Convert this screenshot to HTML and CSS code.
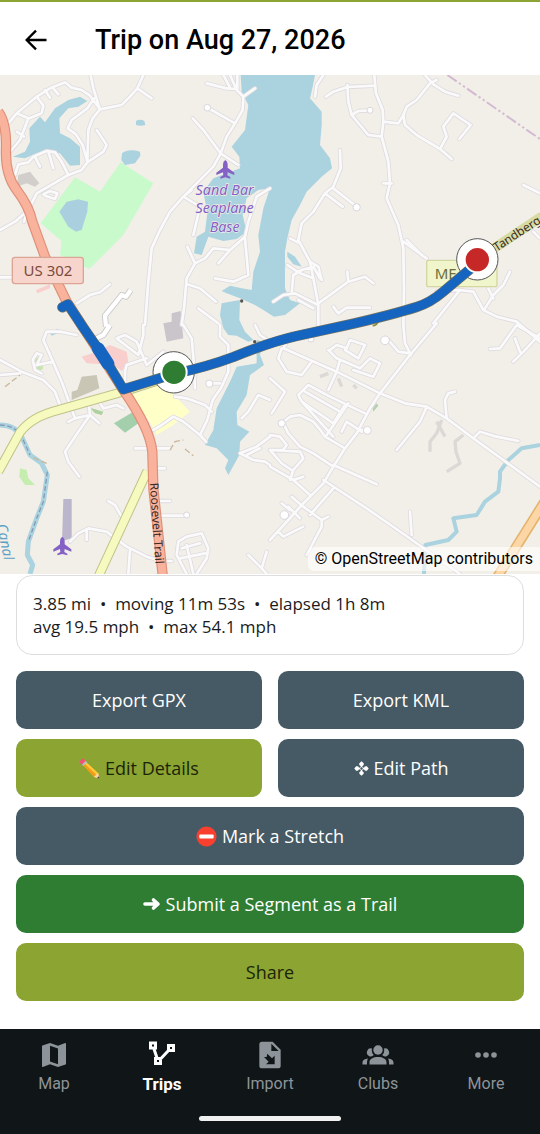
FILE: index.html
```html
<!DOCTYPE html>
<html lang="en">
<head>
    <meta charset="UTF-8">
    <meta name="viewport" content="width=device-width, initial-scale=1.0">
    <title>Trip on Aug 27, 2026</title>
    <link rel="stylesheet" href="styles.css">
</head>
<body>
    <header class="header">
        <button class="back-btn" aria-label="Back">
            <svg viewBox="0 0 24 24" width="28" height="28"><path d="M21 12H4.500M12 4L4 12l8 8" fill="none" stroke="currentColor" stroke-width="2"/></svg>
        </button>
        <h1>Trip on Aug 27, 2026</h1>
    </header>

    <div class="map">
        <svg class="map-canvas" viewBox="0 0 1620 1497" role="img" aria-label="Trip map">
            <defs>
                <g id="roads">
                    <!-- north west -->
                    <path d="M25 145L50 115L110 65L150 40L195 22L215 38L245 45L270 62L300 103M272 0L280 40L300 103L365 90L390 65L412 40L430 0M412 40L455 70M300 103L278 130L265 165L262 260M283 70L262 100L215 135L203 160L228 178L248 210L262 260M290 165L320 210L310 230L262 262L245 285L205 300L110 355L85 405L45 440L0 465M205 300L185 260L165 232L140 228L100 245L85 262L55 268L45 300M145 230L160 280M105 245L120 275M130 358L150 348L172 355L165 372L135 362M32 228L60 195L85 130L50 115M110 65L130 92L125 115L88 130M135 45L150 68M158 38L175 58M50 170L72 185M90 385L72 440M0 607H40"/>
                    <path d="M765 40L730 65L728 105L705 145L680 185L662 235L640 275L550 365L510 410L480 465L455 520L445 620L435 750M620 98L640 108L705 145M578 130L610 165L662 235L715 270M690 0L710 45L730 65M620 25L680 40L712 42M670 0L690 38M712 0V40M575 345L550 365L600 395L580 480M810 340L770 365L745 440L735 485L690 525L640 520L615 550L585 565L560 610L552 700L545 750M562 515L585 565M690 525L655 565M735 490L745 600L700 620L645 610M562 628L600 640L648 680M595 700L655 745M230 685L270 660L300 652L330 628"/>
                    <!-- north east -->
                    <path d="M978 65L1000 50L1042 36L1125 32M1123 0L1128 55L1148 105L1150 140L1145 185L1165 260L1170 325L1160 370L1195 450L1210 520L1212 640L1210 750M1042 30L1045 80L1055 120L1105 180L1145 185M1055 120L1075 108L1110 106M1150 140L1195 145L1210 120L1220 95L1250 75L1290 25L1310 15M1275 0L1300 28L1335 50L1375 62M1210 120L1215 150L1250 180L1320 222L1355 252M1320 222L1340 185L1330 155L1360 115L1412 150L1378 192M970 0L950 30L945 65M1020 225L1022 280L1000 335L975 355L940 410L905 445L895 495L930 560L940 610L955 690L955 750M975 355L1028 395M1000 340L1070 395M1210 500L1280 550M870 490L900 505M880 600L905 585L940 575L960 610M862 570L900 595L940 610M955 685L1045 620L1095 605L1120 625M1045 620L1042 590M820 680L850 660L885 655L955 690M880 600L875 655M1000 695L1015 715L1040 698L1110 698M1150 325H1175M930 560L955 575L965 615M895 675L940 700"/>
                    <path d="M1380 645L1300 745M1310 650L1375 645L1420 650L1450 705L1490 725L1550 740L1620 800M1455 700L1480 660L1510 630L1530 590M1480 670L1465 640M1570 330L1620 355M1600 470L1620 490M1220 495L1270 545"/>
                    <!-- south west -->
                    <path d="M230 780L180 770L140 770L130 795L150 840L185 920L225 1030L270 1020L265 975M0 855L65 890L130 915L165 950L180 990M0 900L60 895M225 1030L205 1040M270 1020L235 1070L195 1130L205 1160L238 1205M270 1020L298 1045M290 970L310 1000L350 990L370 1000M350 790L375 780L410 800L440 870L490 830M350 790L415 840L430 780V750M375 890L380 870L440 850M375 890V940M550 750L575 790L580 845L585 940M660 750L660 785L685 810V890L665 935L638 975L622 1035L600 1080M525 965L560 970L615 990L635 1010M460 1065L485 1050L520 1025L550 1040L600 1080L618 1100M628 925H660M405 1120H510M455 1180H495M480 1278H510M480 1322H560M485 1458H515M325 1278L345 1290L365 1325M210 1400L235 1375L265 1360L320 1370L380 1415L440 1445L490 1460M260 1365V1395M390 1425L385 1497M110 870L125 840L110 835L98 855L105 885L125 895M110 870L160 860M560 1497L530 1440L535 1400L560 1385L605 1375L625 1420L620 1450L590 1497M545 1420L600 1405M540 1450L615 1435M560 1410L580 1497M745 1440L785 1480L800 1430M785 1480L800 1497M765 750L780 780L810 800M725 1030L745 1010L775 960L810 975M810 1085L770 1115L720 1135L760 1155L795 1160L810 1170M740 1140L780 1120"/>
                    <!-- south east -->
                    <path d="M1310 745L1230 840L1140 955L1110 1000L1070 1075L1035 1120L1000 1175L970 1225L905 1290L865 1335L810 1395M850 820L930 855L1010 890L1140 955L1215 985L1280 995L1340 1030L1420 1090L1510 1155L1620 1235M1280 995L1260 1040L1190 1125M1340 1030L1335 975L1345 955L1365 950M1420 1090L1440 1070L1490 1085L1555 1098M1233 840L1215 805L1210 750M1230 835L1195 830L1165 795M845 820L835 850L860 890L905 900L935 860M875 775L850 820M990 825L1010 810L1040 820L1050 795L1095 810L1075 850L1035 825M1010 850L1080 880L1110 850L1140 865L1120 905L1060 885M1010 850L985 825M1020 855L1010 890L985 945M1095 1015L990 965L925 930L895 960L905 980L1000 1045L1035 990M905 980L1000 1085M915 950L1020 1010M980 1080L1045 985M1085 1070L1040 1040L1025 1070M1075 1065L1100 1065M845 1045L870 1025L900 1020L940 1040L965 1070L975 1085L1035 1120M850 1045L865 1075L900 1115L940 1135L1000 1175M810 1080L840 1085L860 1110L850 1125L810 1125M810 1125L900 1130L910 1150L880 1185L870 1215M810 1125L845 1165L875 1185M1000 1170L1130 1228M970 1215L1100 1300L1215 1380L1380 1497M1230 1310L1235 1380M810 1175L880 1215L930 1260M880 1215L910 1205M875 1265L910 1295L965 1335L985 1325M965 1335L965 1355L920 1440M835 1370L850 1385L910 1355M845 1285L870 1305M930 1320L1000 1240M865 1295L900 1330M1470 822L1500 820L1550 750M1540 860L1580 820L1620 775M1550 750L1620 790M1560 830L1545 790M810 910L855 950L815 1015"/>
                </g>
            </defs>

            <rect width="1620" height="1497" fill="#f2efe9"/>

            <!-- land use -->
            <path d="M225 307L300 350L362 262L460 325L370 480L268 582L180 540L185 498L122 445Z" fill="#c8facc"/>
            <path d="M90 290L118 325L105 335L80 325L50 335L55 300Z" fill="#d1cecb"/>
            <path d="M245 905L290 900L298 940L215 975L215 950L232 945Z" fill="#c9c6b6"/>
            <path d="M490 745L515 740V715L542 708L550 790L500 800Z" fill="#c9c5cb"/>
            <path d="M245 845L290 830L330 810L380 830L385 860L365 888L340 870L260 865Z" fill="#f8cfcd"/>
            <path d="M108 645L150 628V640L112 655Z" fill="#f8cfcd"/>
            <path d="M392 960L490 925L570 1010L520 1050L470 1080L455 1050Z" fill="#ffffc8"/>
            <path d="M342 1045L400 1010L415 1045L375 1073Z" fill="#a3cfac"/>
            <path d="M270 998L310 1010L305 1020L285 1015Z" fill="#add19e"/>
            <path d="M105 850L120 845L130 880L115 892L102 875Z" fill="#c6e6ae"/>
            <path d="M60 1180L80 1185L85 1210L105 1230L75 1230L58 1205Z" fill="#c5edb0"/>
            <path d="M190 1272H215V1390L186 1398Z" fill="#bbb6cc"/>
            <path d="M1118 1000L1130 985L1135 992L1120 1010Z" fill="#b5d0b2"/>

            <!-- water -->
            <g fill="#aad3df">
                <path d="M38 245L75 230L90 200L88 160L120 125L135 142L165 100L205 75L240 65L262 78L235 95L205 100L178 130L180 175L210 190L240 215L240 270L210 272L180 235L150 228L110 235L75 250Z"/>
                <path d="M408 138Q420 130 433 138L436 150Q420 155 408 150Z"/>
                <path d="M366 235Q385 220 420 230L421 242L405 265L375 270L364 255Z"/>
                <path d="M200 380L235 373L264 380L262 410L245 465L228 470L205 455L178 410Z" fill="#aad0df"/>
                <path d="M722 0H945L938 35L930 70L965 110L965 150L960 210L990 250L996 280L965 305L920 350L900 390L875 435L862 490L855 530L855 640L870 675L900 685L855 720L822 725L790 705L765 690L720 670L680 655L665 648L690 632L725 640L755 645L760 590L780 530L775 480L790 400L810 340L775 345L740 370L728 420L740 470L710 492L670 498L625 485L605 540L582 535L590 485L615 470L622 415L610 350L640 310L720 280L718 245L695 215L735 165L745 90L725 50Z"/>
                <path d="M862 530L885 545L905 575L880 568L862 545Z"/>
                <path d="M665 685L720 675L718 735L735 770L760 795L745 800L710 782L685 780L670 760L660 720Z"/>
                <path d="M770 795L790 800L780 840L792 870L750 900L740 960L710 1010L712 1050L748 1070L720 1100L718 1140L685 1200L675 1180L685 1155L650 1120L615 1110L640 1065L650 1000L670 960L690 920L710 875L770 865Z"/>
                <path d="M148 770L175 762L180 772L155 782Z"/>
            </g>
            <path d="M0 1050Q45 1050 65 1085L90 1140L125 1165L142 1200L130 1280L110 1330L85 1400L82 1440L98 1470L90 1497" fill="none" stroke="#aad3df" stroke-width="15" stroke-linejoin="round"/>
            <path d="M0 1050Q45 1050 65 1085L90 1140M142 1190L130 1280L110 1330L85 1400" fill="none" stroke="#8899b5" stroke-width="4" stroke-dasharray="14 8"/>
            <path d="M1272 1497L1276 1410L1345 1395L1370 1370L1360 1330L1430 1320L1455 1280L1495 1250L1500 1210L1500 1190L1525 1155L1565 1120L1620 1110" fill="none" stroke="#aad3df" stroke-width="12" stroke-linejoin="round"/>

            <!-- minor roads -->
            <use href="#roads" class="road-casing"/>
            <use href="#roads" class="road-fill"/>
            <path d="M318 755L315 722L345 685L365 660L378 665L392 645M330 750L310 780L270 800" class="street-casing"/>
            <path d="M318 755L315 722L345 685L365 660L378 665L392 645M330 750L310 780L270 800" class="street-fill"/>
            <path d="M1325 1035L1310 1075L1290 1100L1290 1130M1310 1040L1335 1085M1390 1080L1365 1100L1368 1130L1380 1165L1340 1190M960 905L985 895M1015 910L1025 935M1060 930L1070 940" class="service-road"/>
            <g fill="#fff" stroke="#dad6dc" stroke-width="3">
                <circle cx="622" cy="98" r="10"/><circle cx="1110" cy="106" r="9"/><circle cx="1070" cy="397" r="11"/><circle cx="628" cy="926" r="11"/><circle cx="1155" cy="796" r="13"/><circle cx="845" cy="1045" r="11"/><circle cx="1102" cy="1066" r="12"/><circle cx="853" cy="1320" r="13"/><circle cx="560" cy="1320" r="9"/><circle cx="933" cy="792" r="9"/>
            </g>
            <path d="M15 935L60 900M510 1125L525 1100L550 1095M555 1122L580 1142M100 1148L140 1165" fill="none" stroke="#c9b79b" stroke-width="4" stroke-dasharray="18 8"/>
            <path d="M1342 0L1620 192" fill="none" stroke="#d3bad1" stroke-width="6" stroke-dasharray="34 8 7 8 7 8"/>

            <!-- main roads -->
            <g fill="none" stroke-linejoin="round">
                <path d="M-5 1190L60 1072Q95 1025 175 1005L370 950L521 902M295 1505L442 1188" stroke="#c0c38a" stroke-width="29"/>
                <path d="M-5 1190L60 1072Q95 1025 175 1005L370 950L521 902M295 1505L442 1188" stroke="#f7fabf" stroke-width="23"/>
                <path d="M1432 553L1625 425" stroke="#d7dca4" stroke-width="30"/>
                <path d="M1480 1525L1640 1270" stroke="#e4b169" stroke-width="31"/>
                <path d="M1480 1525L1640 1270" stroke="#fcd6a4" stroke-width="22"/>
                <path d="M-5 110Q20 145 18 220Q15 300 50 345Q88 395 97 440L135 545L200 680L370 945Q450 1060 457 1130L460 1240L488 1500" stroke="#de8f78" stroke-width="31"/>
                <path d="M-5 110Q20 145 18 220Q15 300 50 345Q88 395 97 440L135 545L200 680L370 945Q450 1060 457 1130L460 1240L488 1500" stroke="#f9b29c" stroke-width="24"/>
            </g>

            <!-- labels -->
            <g id="plane" fill="#8461c4">
                <path d="M676 255Q683 259 683 268V278L703 293V300L683 292L682 301L691 306V311L676 307L661 311V306L670 301L669 292L649 300V293L669 278V268Q669 259 676 255Z"/>
            </g>
            <use href="#plane" x="-489" y="1130"/>
            <g class="place-label">
                <text x="674" y="361">Sand Bar</text>
                <text x="674" y="415">Seaplane</text>
                <text x="674" y="470">Base</text>
            </g>
            <rect x="37" y="547" width="213" height="79" rx="8" class="shield-us"/>
            <text x="144" y="603" class="shield-text">US 302</text>
            <rect x="1280" y="556" width="211" height="79" rx="6" class="shield-me"/>
            <text x="1337" y="611" class="shield-text shield-text-me">ME</text>
            <text transform="translate(1490 530) rotate(-33)" class="road-label">Tandberg T</text>
            <text transform="translate(449 1224) rotate(86)" class="road-label">Roosevelt Trail</text>
            <text transform="translate(-10 1350) rotate(78)" class="water-label">Canal</text>
            <circle cx="725" cy="678" r="5" fill="#555"/>
            <circle cx="764" cy="800" r="5" fill="#555"/>
            <path d="M1118 752Q1130 752 1135 738" fill="none" stroke="#8c8b3a" stroke-width="5"/>

            <!-- recorded trip -->
            <circle cx="521" cy="892" r="62" class="pin-ring"/>
            <circle cx="1432" cy="553" r="62" class="pin-ring"/>
            <path d="M187 697L204 688L250 758L296 824L322 864L370 943L521 897Q620 876 700 846Q810 801 890 783L1060 746Q1180 718 1250 696Q1290 684 1330 650L1432 564" class="track-edge"/>
            <path d="M187 697L204 688L250 758L296 824L322 864L370 943L521 897Q620 876 700 846Q810 801 890 783L1060 746Q1180 718 1250 696Q1290 684 1330 650L1432 564" class="track"/>
            <path d="M294 820L324 866" class="track track-wide"/>
            <circle cx="522" cy="892" r="38" class="pin pin-start"/>
            <circle cx="1432" cy="554" r="38" class="pin pin-end"/>
        </svg>
        <span class="attribution">© OpenStreetMap contributors</span>
    </div>

    <main class="content">
        <section class="stats">
            3.85 mi &nbsp;•&nbsp; moving 11m 53s &nbsp;•&nbsp; elapsed 1h 8m<br>
            avg 19.5 mph &nbsp;•&nbsp; max 54.1 mph
        </section>

        <div class="actions">
            <button class="btn">Export GPX</button>
            <button class="btn">Export KML</button>
            <button class="btn btn-olive">
                <svg viewBox="0 0 22 22" width="21" height="21">
                    <path d="M2 5L5 2L20 16L21 21L16 20Z" fill="#ffb52e"/>
                    <path d="M3.500 6.500L5 5L19 18.500L16 20Z" fill="#f59a16"/>
                    <path d="M5 2L20 16L18.500 17.500L4 4Z" fill="#ffca3a"/>
                    <path d="M20 15.500L21.500 21.500L15.500 20Z" fill="#f6d7a4"/>
                    <path d="M20.800 19L21.500 21.500L19 20.900Z" fill="#3f3f3f"/>
                    <path d="M3 7L7 3L8.500 4.500L4.500 8.500Z" fill="#a9c3cc"/>
                    <path d="M3 7L7 3L5.500 1.500Q4 0 2 2T1.500 5.500Z" fill="#f0527c"/>
                </svg>
                Edit Details
            </button>
            <button class="btn">
                <svg viewBox="0 0 16 16" width="15" height="15" fill="currentColor">
                    <g id="petal"><path d="M8 .300L10.300 2.300Q11 4.600 9 5.200L8.500 6.500h-1L7 5.200Q5 4.600 5.700 2.300z"/></g>
                    <use href="#petal" transform="rotate(90 8 8)"/>
                    <use href="#petal" transform="rotate(180 8 8)"/>
                    <use href="#petal" transform="rotate(270 8 8)"/>
                    <circle cx="8" cy="8" r="1.800" fill="none" stroke="currentColor" stroke-width=".8"/>
                </svg>
                Edit Path
            </button>
            <button class="btn btn-wide">
                <svg viewBox="0 0 22 22" width="21" height="21">
                    <circle cx="11" cy="11" r="10.500" fill="#f9402f"/>
                    <rect x="3.500" y="9" width="15" height="4" rx="1" fill="#fff"/>
                </svg>
                Mark a Stretch
            </button>
            <button class="btn btn-green btn-wide">
                <svg viewBox="0 0 18 16" width="18" height="16">
                    <path d="M2 8H14M10.500 4L15 8L10.500 12" fill="none" stroke="currentColor" stroke-width="3.600" stroke-linecap="round" stroke-linejoin="round"/>
                </svg>
                Submit a Segment as a Trail
            </button>
            <button class="btn btn-olive btn-wide">Share</button>
        </div>
    </main>

    <footer class="footer">
        <nav class="tabs">
            <a class="tab" href="#map">
                <svg viewBox="0 0 24 24" width="32" height="32" fill="currentColor"><path fill-rule="evenodd" d="M20.500 3l-.160.030L15 5.100 9 3 3.360 4.900c-.210.070-.360.250-.360.480V20.500c0 .280.220.500.500.500l.160-.030L9 18.900l6 2.100 5.640-1.900c.210-.070.360-.250.360-.480V3.500c0-.280-.220-.500-.500-.500zM15 19l-6-2.110V5l6 2.110V19z"/></svg>
                Map
            </a>
            <a class="tab active" href="#trips">
                <svg viewBox="0 0 32 32" width="32" height="32" fill="none" stroke="currentColor" stroke-width="3"><path d="M4.500 4h5v5h-5zM22.500 6.500h5v5h-5zM9.500 19.500h5v5h-5zM8 10l3 9M22.500 11.500l-8 8.500"/></svg>
                Trips
            </a>
            <a class="tab" href="#import">
                <svg viewBox="0 0 24 24" width="32" height="32" fill="currentColor"><path fill-rule="evenodd" d="M14 2H6a2 2 0 0 0-2 2v16a2 2 0 0 0 2 2h12a2 2 0 0 0 2-2V8zM13 3.500L18.500 9H13zM10 11l3.500 3.500L15.500 12.500V19H9l2-2-3.500-3.500L9.500 13.500z"/></svg>
                Import
            </a>
            <a class="tab" href="#clubs">
                <svg viewBox="0 0 32 32" width="32" height="32" fill="currentColor">
                    <circle cx="16" cy="11" r="4.700"/>
                    <path d="M10 9.500a4 4 0 1 0 1.800 6.600A7 7 0 0 1 10 9.500zM22 9.500a4 4 0 1 1-1.800 6.600A7 7 0 0 0 22 9.500z"/>
                    <path d="M7.500 25.500V23c0-3 4-5 8.500-5s8.500 2 8.500 5v2.500zM.500 25.500V23.500c0-2.500 2.500-3.500 5.500-4-1 1.500-1 3-1 6zM31.500 25.500V23.500c0-2.500-2.500-3.500-5.500-4 1 1.500 1 3 1 6z"/>
                </svg>
                Clubs
            </a>
            <a class="tab" href="#more">
                <svg viewBox="0 0 32 32" width="32" height="32" fill="currentColor"><circle cx="8" cy="16" r="2.800"/><circle cx="16" cy="16" r="2.800"/><circle cx="24" cy="16" r="2.800"/></svg>
                More
            </a>
        </nav>
        <div class="home-bar"></div>
    </footer>
</body>
</html>
```

FILE: styles.css
```css
* {
    box-sizing: border-box;
}

body {
    margin: 0;
    min-height: 100vh;
    display: flex;
    flex-direction: column;
    background: #fff;
    font-family: "Open Sans", "Noto Sans", sans-serif;
    color: #1b1b1b;
}

.header {
    display: flex;
    align-items: center;
    gap: 45px;
    height: 75px;
    padding: 2px 22px 0;
    border-top: 2px solid #8ba432;
}

.header h1 {
    margin: 0;
    font-family: Roboto, sans-serif;
    font-size: 27px;
    font-weight: 500;
    line-height: 32px;
    color: #000;
}

.back-btn {
    display: flex;
    padding: 0;
    border: none;
    background: none;
    color: #000;
    cursor: pointer;
}

/* Map */
.map {
    position: relative;
}

.map-canvas {
    display: block;
    width: 100%;
}

.road-casing,
.road-fill {
    fill: none;
    stroke-linecap: round;
    stroke-linejoin: round;
}

.road-casing {
    stroke: #dfdbe0;
    stroke-width: 13px;
}

.road-fill {
    stroke: #fbfafa;
    stroke-width: 8px;
}

.street-casing,
.street-fill {
    fill: none;
    stroke: #c8c6c8;
    stroke-width: 18px;
    stroke-linejoin: round;
}

.street-fill {
    stroke: #fff;
    stroke-width: 13px;
}

.service-road {
    fill: none;
    stroke: #dbd8d6;
    stroke-width: 10px;
    stroke-linejoin: round;
}

.place-label {
    font-family: "Noto Sans", sans-serif;
    font-size: 43px;
    font-style: italic;
    text-anchor: middle;
    fill: #8461c4;
    stroke: #f2efe9;
    stroke-width: 4px;
    paint-order: stroke;
}

.shield-us {
    fill: #f7d5cc;
    stroke: #dba594;
    stroke-width: 4px;
}

.shield-me {
    fill: #f1f5cb;
    stroke: #d3d7a2;
    stroke-width: 4px;
}

.shield-text {
    font-family: "Noto Sans", sans-serif;
    font-size: 45px;
    text-anchor: middle;
    fill: #7d4a3c;
}

.shield-text-me {
    fill: #6b6e3c;
}

.road-label {
    font-family: "Noto Sans", sans-serif;
    font-size: 36px;
    fill: #3a2c26;
}

.water-label {
    font-family: "Noto Sans", sans-serif;
    font-size: 43px;
    font-style: italic;
    fill: #5b9fc4;
}

.track,
.track-edge {
    fill: none;
    stroke: #1565c0;
    stroke-width: 27px;
    stroke-linecap: round;
    stroke-linejoin: round;
}

.track-edge {
    stroke: #76745c;
    stroke-width: 31px;
}

.track-wide {
    stroke-width: 38px;
}

.pin-ring {
    fill: #fff;
    stroke: #555;
    stroke-width: 3px;
}

.pin {
    stroke: #fff;
    stroke-width: 6px;
}

.pin-start {
    fill: #2e7d32;
}

.pin-end {
    fill: #c62828;
}

.attribution {
    position: absolute;
    right: 0;
    bottom: 3px;
    padding: 0 7px;
    border-radius: 6px 0 0 6px;
    background: rgba(255, 255, 255, 0.6);
    font-family: Roboto, sans-serif;
    font-size: 16px;
    line-height: 24px;
    color: #000;
}

/* Trip details */
.content {
    display: flex;
    flex-direction: column;
    gap: 16px;
    padding: 1px 16px 24px;
}

.stats {
    padding: 16px;
    border: 1px solid #dedede;
    border-radius: 16px;
    font-size: 17px;
    line-height: 23px;
}

.actions {
    display: grid;
    grid-template-columns: 1fr 1fr;
    gap: 10px 16px;
}

.btn {
    display: flex;
    justify-content: center;
    align-items: center;
    gap: 5px;
    height: 58px;
    padding: 0 16px;
    border: none;
    border-radius: 10px;
    background: #465a65;
    color: #fff;
    font-family: inherit;
    font-size: 18px;
    cursor: pointer;
}

.btn-wide {
    grid-column: span 2;
}

.btn-olive {
    background: #8ba432;
    color: #1c2408;
}

.btn-green {
    background: #2e7d32;
}

/* Bottom navigation */
.footer {
    margin-top: auto;
    padding: 10px 0 13px;
    background: #101518;
}

.tabs {
    display: flex;
}

.tab {
    flex: 1;
    display: flex;
    flex-direction: column;
    align-items: center;
    gap: 2px;
    color: #8d9499;
    font-family: Roboto, sans-serif;
    font-size: 16px;
    line-height: 22px;
    text-decoration: none;
}

.tab.active {
    color: #fff;
    font-size: 17px;
    font-weight: 700;
}

.home-bar {
    width: 142px;
    height: 5px;
    margin: 21px auto 0;
    border-radius: 3px;
    background: #f0f0f0;
}
```
